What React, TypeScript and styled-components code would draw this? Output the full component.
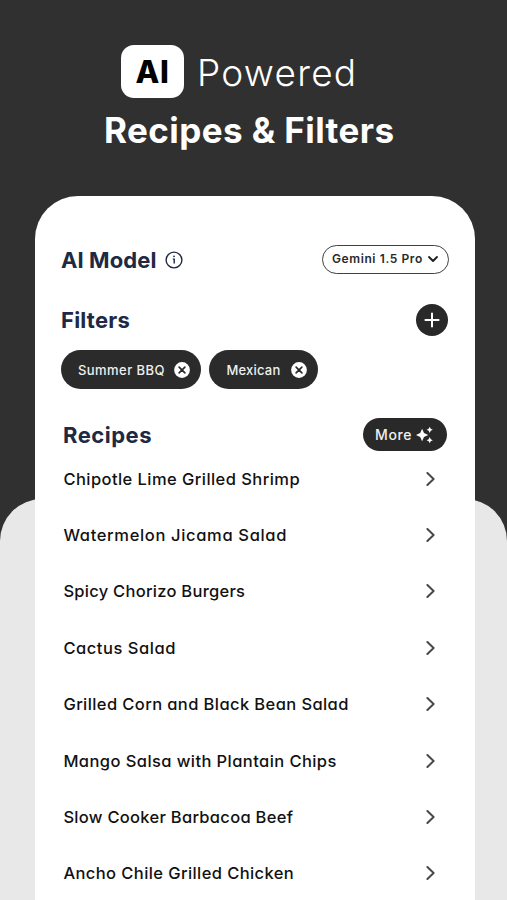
import React from "react";
import styled, { createGlobalStyle } from "styled-components";

const GlobalStyle = createGlobalStyle`
  * { box-sizing: border-box; }
  body { margin: 0; background: #303030; }
  button { font: inherit; color: inherit; border: 0; padding: 0; background: none; }
`;

const Page = styled.main`
  position: relative;
  isolation: isolate;
  width: 507px;
  height: 900px;
  overflow: hidden;
  display: flex;
  flex-direction: column;
  background: #303030;
  font-family: Inter, sans-serif;
`;

const Backdrop = styled.div`
  position: absolute;
  z-index: -1;
  inset: 499px 0 0;
  border-radius: 42px 42px 0 0;
  background: #e8e8e8;
`;

const Hero = styled.header`
  height: 196px;
  padding-top: 45px;
  flex: none;
  color: #fff;
`;

const HeroLine = styled.div`
  display: flex;
  align-items: center;
  gap: 13px;
  height: 53px;
  padding-left: 121px;
`;

const AiBadge = styled.span`
  display: flex;
  align-items: center;
  justify-content: center;
  width: 63px;
  height: 53px;
  border-radius: 13px;
  background: #fff;
  color: #000;
  font-size: 31px;
  font-weight: 800;
  letter-spacing: 0.6px;
`;

const Powered = styled.span`
  padding-top: 3px;
  font-size: 37px;
  font-weight: 300;
  line-height: 50px;
  letter-spacing: 1.25px;
`;

const HeroTitle = styled.h1`
  margin: 10px 0 0;
  padding-left: 104px;
  font-size: 35px;
  font-weight: 700;
  line-height: 44px;
  letter-spacing: 0.42px;
  white-space: nowrap;
`;

const Card = styled.section`
  flex: 1;
  width: 440px;
  margin-left: 35px;
  padding: 46px 26px 0;
  border-radius: 43px 43px 0 0;
  background: #fff;
`;

const SectionRow = styled.div<{ $height: number; $top?: number; $inset?: number }>`
  display: flex;
  align-items: center;
  justify-content: space-between;
  height: ${(p) => p.$height}px;
  margin-top: ${(p) => p.$top ?? 0}px;
  padding: 0 ${(p) => p.$inset ?? 0}px;
`;

const TitleGroup = styled.div`
  display: flex;
  align-items: center;
  gap: 8px;
  padding-top: 2px;
`;

const Heading = styled.h2<{ $tracking: number }>`
  margin: 0;
  color: #202943;
  font-size: 22px;
  font-weight: 700;
  line-height: 30px;
  letter-spacing: ${(p) => p.$tracking}px;
  white-space: nowrap;
`;

const ModelSelect = styled.button`
  display: flex;
  align-items: center;
  gap: 4px;
  width: 127px;
  height: 29px;
  padding: 0 0 1px 9px;
  border: 1.5px solid #404040;
  border-radius: 15px;
  color: #292929;
  font-size: 12px;
  font-weight: 600;
  letter-spacing: 0.6px;
  white-space: nowrap;
`;

const AddButton = styled.button`
  display: grid;
  place-items: center;
  width: 32px;
  height: 32px;
  margin-right: 1px;
  border-radius: 50%;
  background: #292929;
`;

const ChipRow = styled.div`
  display: flex;
  gap: 8px;
  margin-top: 14px;
  margin-left: -0.5px;
`;

const Chip = styled.span<{ $width: number; $tracking: number }>`
  display: flex;
  align-items: center;
  justify-content: space-between;
  width: ${(p) => p.$width}px;
  height: 39px;
  padding: 0 11px 0 17.5px;
  border-radius: 20px;
  background: #2b2b2b;
  color: #f0f0f0;
  font-size: 13px;
  font-weight: 500;
  letter-spacing: ${(p) => p.$tracking}px;
  white-space: nowrap;
`;

const ChipRemove = styled.button`
  display: flex;
`;

const MoreButton = styled.button`
  display: flex;
  align-items: center;
  gap: 4px;
  width: 84px;
  height: 33px;
  padding-left: 12.5px;
  margin-right: 0.5px;
  border-radius: 17px;
  background: #292929;
  color: #f0f0f0;
  font-size: 14px;
  font-weight: 500;
  letter-spacing: 0.6px;
`;

const RecipeList = styled.ul`
  margin: -0.6px 0 0;
  padding: 0 13px 0 2.4px;
  list-style: none;
`;

const RecipeItem = styled.li<{ $tracking: number }>`
  display: flex;
  align-items: center;
  justify-content: space-between;
  height: 56.4px;
  color: #111;
  font-size: 16.5px;
  font-weight: 500;
  font-feature-settings: "cv11" 1;
  letter-spacing: ${(p) => p.$tracking}px;
  white-space: nowrap;
`;

const recipes = [
  { name: "Chipotle Lime Grilled Shrimp", tracking: 0.44 },
  { name: "Watermelon Jicama Salad", tracking: 0.66 },
  { name: "Spicy Chorizo Burgers", tracking: 0.27 },
  { name: "Cactus Salad", tracking: 0.54 },
  { name: "Grilled Corn and Black Bean Salad", tracking: 0.4 },
  { name: "Mango Salsa with Plantain Chips", tracking: 0.42 },
  { name: "Slow Cooker Barbacoa Beef", tracking: 0.29 },
  { name: "Ancho Chile Grilled Chicken", tracking: 0.41 },
];

const filters = [
  { name: "Summer BBQ", width: 140.5, tracking: 0.45 },
  { name: "Mexican", width: 108.5, tracking: 0.2 },
];

const InfoIcon = () => (
  <svg width="18" height="18" viewBox="0 0 18 18" fill="none" stroke="#202943">
    <circle cx="9" cy="9" r="7.9" strokeWidth="1.4" />
    <path d="M7.8 8.1H9.2V12.5" strokeWidth="1.4" />
    <circle cx="9" cy="5.3" r="0.9" fill="#202943" stroke="none" />
  </svg>
);

const DownIcon = () => (
  <svg width="12" height="12" viewBox="0 0 12 12" fill="none" stroke="#1c1c1c" strokeWidth="1.8" strokeLinecap="round" strokeLinejoin="round">
    <path d="M2 4L6 8L10 4" />
  </svg>
);

const PlusIcon = () => (
  <svg width="16" height="16" viewBox="0 0 16 16" stroke="#fff" strokeWidth="2" strokeLinecap="round">
    <path d="M8 1.4V14.6M1.4 8H14.6" />
  </svg>
);

const CloseIcon = () => (
  <svg width="16" height="16" viewBox="0 0 16 16">
    <circle cx="8" cy="8" r="7.9" fill="#fff" />
    <path d="M5.1 5.1L10.9 10.9M10.9 5.1L5.1 10.9" stroke="#292929" strokeWidth="1.6" strokeLinecap="round" />
  </svg>
);

const SparkleIcon = () => (
  <svg width="18" height="18" viewBox="0 0 18 18" fill="#fff">
    <path d="M6.1 2.8L8 7.1L12.3 9L8 10.9L6.1 15.2L4.2 10.9L0 9L4.2 7.1Z" />
    <path d="M13.7 0.7L14.7 2.8L16.8 3.8L14.7 4.8L13.7 6.9L12.7 4.8L10.6 3.8L12.7 2.8Z" />
    <path d="M13.7 11.1L14.7 13.2L16.8 14.2L14.7 15.2L13.7 17.3L12.7 15.2L10.6 14.2L12.7 13.2Z" />
  </svg>
);

const ChevronIcon = () => (
  <svg width="10" height="16" viewBox="0 0 10 16" fill="none" stroke="#484848" strokeWidth="2" strokeLinecap="round" strokeLinejoin="round">
    <path d="M1.4 2L7.6 8L1.4 14" />
  </svg>
);

export default function App() {
  return (
    <Page>
      <GlobalStyle />
      <Backdrop />
      <Hero>
        <HeroLine>
          <AiBadge>AI</AiBadge>
          <Powered>Powered</Powered>
        </HeroLine>
        <HeroTitle>Recipes &amp; Filters</HeroTitle>
      </Hero>
      <Card>
        <SectionRow $height={34}>
          <TitleGroup>
            <Heading $tracking={0.1}>AI Model</Heading>
            <InfoIcon />
          </TitleGroup>
          <ModelSelect>
            Gemini 1.5 Pro
            <DownIcon />
          </ModelSelect>
        </SectionRow>
        <SectionRow $height={32} $top={28}>
          <Heading $tracking={0.22}>Filters</Heading>
          <AddButton aria-label="Add filter">
            <PlusIcon />
          </AddButton>
        </SectionRow>
        <ChipRow>
          {filters.map((f) => (
            <Chip key={f.name} $width={f.width} $tracking={f.tracking}>
              {f.name}
              <ChipRemove aria-label="Remove filter">
                <CloseIcon />
              </ChipRemove>
            </Chip>
          ))}
        </ChipRow>
        <SectionRow $height={33} $top={29} $inset={2}>
          <Heading $tracking={0.5}>Recipes</Heading>
          <MoreButton>
            More
            <SparkleIcon />
          </MoreButton>
        </SectionRow>
        <RecipeList>
          {recipes.map((r) => (
            <RecipeItem key={r.name} $tracking={r.tracking}>
              {r.name}
              <ChevronIcon />
            </RecipeItem>
          ))}
        </RecipeList>
      </Card>
    </Page>
  );
}
